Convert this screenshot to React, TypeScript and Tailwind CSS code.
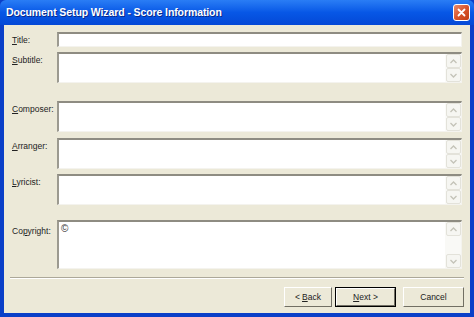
// Document Setup Wizard — Score Information (XP-style dialog)

const fields = [
  { label: "Title", key: "T", rest: "itle:", multi: false, h: "h-[15px]", mt: "mt-[7px]" },
  { label: "Subtitle", key: "S", rest: "ubtitle:", multi: true, h: "h-[31px]", mt: "mt-[5px]" },
  { label: "Composer", key: "C", rest: "omposer:", multi: true, h: "h-[31px]", mt: "mt-[18px]" },
  { label: "Arranger", key: "A", rest: "rranger:", multi: true, h: "h-[31px]", mt: "mt-[6px]" },
  { label: "Lyricist", key: "L", rest: "yricist:", multi: true, h: "h-[31px]", mt: "mt-[5px]" },
];

const Chevron = ({ up }: { up?: boolean }) => (
  <svg width="7" height="5" viewBox="0 0 7 5">
    <path
      d={up ? "M0.5 4 L3.5 1 L6.5 4" : "M0.5 1 L3.5 4 L6.5 1"}
      fill="none"
      stroke="#c4c3b8"
      strokeWidth="1.3"
    />
  </svg>
);

const ScrollBtn = ({ up }: { up?: boolean }) => (
  <div className="w-[15px] h-[14px] flex items-center justify-center rounded-[2px] border border-[#e3e2da] bg-[#f6f6f2]">
    <Chevron up={up} />
  </div>
);

const ScrollBar = () => (
  <div className="w-[16px] h-full flex flex-col justify-between items-end bg-[#fbfbf9]">
    <ScrollBtn up />
    <ScrollBtn />
  </div>
);

const Field = ({ multi, h, children }: { multi?: boolean; h: string; children?: React.ReactNode }) => (
  <div
    className={`flex-1 ${h} bg-white border-t-2 border-l-2 border-b border-r border-t-[#8e8c82] border-l-[#9c9a90] border-b-[#f4f3ee] border-r-[#f4f3ee] flex`}
  >
    <div className="flex-1 pl-[2px] pt-[1px] text-[8px] leading-[10px] text-[#444]">{children}</div>
    {multi && <ScrollBar />}
  </div>
);

const Label = ({ k, rest, top }: { k: string; rest: string; top: string }) => (
  <div className={`w-[53px] pl-[8px] ${top} text-[8.5px] leading-[10px] text-[#222]`}>
    <span className="underline underline-offset-1">{k}</span>
    {rest}
  </div>
);

const Button = ({ children, def, w }: { children: React.ReactNode; def?: boolean; w: string }) => (
  <div className={`${w} h-[20px] ${def ? "border border-black" : ""}`}>
    <div className="w-full h-full border-t border-l border-b border-r border-t-white border-l-white border-b-[#716f64] border-r-[#716f64] bg-[#ece9d8] flex items-center justify-center text-[8.5px] text-[#222]">
      {children}
    </div>
  </div>
);

export default function App() {
  return (
    <div className="w-[474px] h-[317px] bg-[#0a3fc8] flex flex-col font-['Liberation_Sans',Arial,sans-serif] overflow-hidden">
      {/* title bar */}
      <div className="h-[25px] flex items-center justify-between pl-[6px] pr-[4px] bg-gradient-to-b from-[#2a7df5] via-[#0757e6] to-[#0448d6] rounded-t-[6px]">
        <span className="text-white font-bold text-[10.5px] tracking-[-0.1px] [text-shadow:1px_1px_0_#0a2a8a]">
          Document Setup Wizard - Score Information
        </span>
        <div className="w-[17px] h-[17px] rounded-[3px] border border-white bg-gradient-to-br from-[#e88a6a] via-[#d8552c] to-[#c23d12] flex items-center justify-center">
          <svg width="9" height="9" viewBox="0 0 9 9">
            <path d="M1.5 1.5 L7.5 7.5 M7.5 1.5 L1.5 7.5" stroke="white" strokeWidth="1.8" strokeLinecap="round" />
          </svg>
        </div>
      </div>

      {/* client area */}
      <div className="flex-1 mx-[4px] mb-[4px] bg-[#ece9d8] flex flex-col">
        {fields.map((f) => (
          <div key={f.label} className={`flex ${f.mt} pr-[8px]`}>
            <Label k={f.key} rest={f.rest} top="pt-[3px]" />
            <Field multi={f.multi} h={f.h} />
          </div>
        ))}

        <div className="flex mt-[15px] pr-[8px]">
          <div className="w-[53px] pl-[8px] pt-[6px] text-[8.5px] leading-[10px] text-[#222]">
            Co<span className="underline underline-offset-1">p</span>yright:
          </div>
          <div className="flex-1 h-[49px] bg-white border-t-2 border-l-2 border-b border-r border-t-[#8e8c82] border-l-[#9c9a90] border-b-[#f4f3ee] border-r-[#f4f3ee] flex">
            <div className="flex-1 pl-[2px] pt-[1px] text-[10px] leading-[11px] text-[#333]">©</div>
            <div className="w-[16px] h-full flex flex-col justify-between items-end bg-[#f9f9f6]">
              <ScrollBtn up />
              <ScrollBtn />
            </div>
          </div>
        </div>

        {/* separator */}
        <div className="mt-[8px] mx-[6px] border-t border-b border-t-[#aca899] border-b-white" />

        {/* buttons */}
        <div className="mt-[8px] flex justify-end pr-[6px]">
          <Button w="w-[48px]">
            &lt; <span className="underline underline-offset-1 ml-[2px]">B</span>ack
          </Button>
          <div className="w-[3px]" />
          <Button w="w-[61px]" def>
            <span className="underline underline-offset-1">N</span>ext &gt;
          </Button>
          <div className="w-[7px]" />
          <Button w="w-[61px]">Cancel</Button>
        </div>
      </div>
    </div>
  );
}
